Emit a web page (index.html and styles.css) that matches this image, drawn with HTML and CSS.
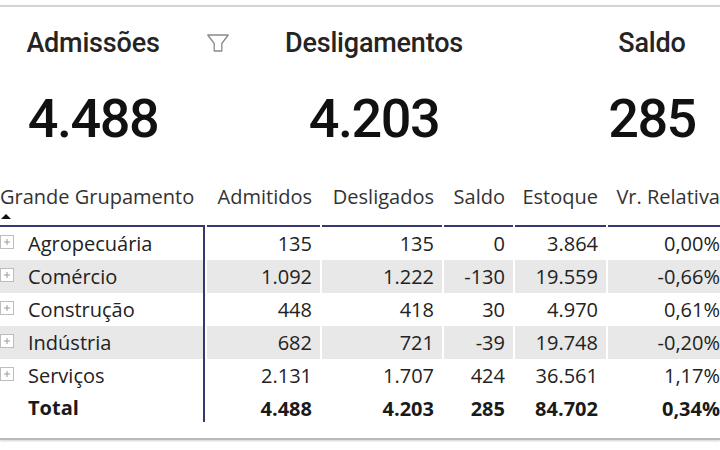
FILE: index.html
```html
<!DOCTYPE html>
<html lang="pt-BR">
<head>
<meta charset="utf-8">
<title>Admissões e Desligamentos</title>
<link rel="stylesheet" href="styles.css">
</head>
<body>
<div class="frame">
  <section class="kpis">
    <div class="card">
      <div class="card-title">Admissões</div>
      <div class="card-value">4.488</div>
    </div>
    <div class="card">
      <div class="card-title">Desligamentos</div>
      <div class="card-value">4.203</div>
    </div>
    <div class="card">
      <div class="card-title">Saldo</div>
      <div class="card-value">285</div>
    </div>
    <svg class="filter-icon" width="22" height="18" viewBox="0 0 22 18" aria-hidden="true">
      <path d="M0.8 1 H21.2 L14.8 9.5 V17 H7.2 V9.5 Z" fill="none" stroke="#8a8a8a" stroke-width="1.3" stroke-linejoin="round"/>
    </svg>
  </section>

  <section class="table-wrap">
    <div class="matrix">
      <div class="hcell first">
        <div class="htext">Grande Grupamento</div>
        <div class="sort-arrow"></div>
      </div>
      <div class="hcell num"><div class="htext">Admitidos</div></div>
      <div class="hcell num"><div class="htext">Desligados</div></div>
      <div class="hcell num"><div class="htext">Saldo</div></div>
      <div class="hcell num"><div class="htext">Estoque</div></div>
      <div class="hcell num"><div class="htext">Vr. Relativa</div></div>

      <div class="cell label"><svg class="plus" width="14" height="14" viewBox="0 0 14 14"><rect x="0.5" y="0.5" width="13" height="13" fill="#fff" stroke="#bdbdbd"/><path d="M4 7 H10 M7 4 V10" stroke="#9a9a9a" stroke-width="1"/></svg><span>Agropecuária</span></div>
      <div class="cell num">135</div>
      <div class="cell num">135</div>
      <div class="cell num">0</div>
      <div class="cell num">3.864</div>
      <div class="cell num">0,00%</div>

      <div class="cell label band"><svg class="plus" width="14" height="14" viewBox="0 0 14 14"><rect x="0.5" y="0.5" width="13" height="13" fill="#fff" stroke="#bdbdbd"/><path d="M4 7 H10 M7 4 V10" stroke="#9a9a9a" stroke-width="1"/></svg><span>Comércio</span></div>
      <div class="cell num band">1.092</div>
      <div class="cell num band">1.222</div>
      <div class="cell num band">-130</div>
      <div class="cell num band">19.559</div>
      <div class="cell num band">-0,66%</div>

      <div class="cell label"><svg class="plus" width="14" height="14" viewBox="0 0 14 14"><rect x="0.5" y="0.5" width="13" height="13" fill="#fff" stroke="#bdbdbd"/><path d="M4 7 H10 M7 4 V10" stroke="#9a9a9a" stroke-width="1"/></svg><span>Construção</span></div>
      <div class="cell num">448</div>
      <div class="cell num">418</div>
      <div class="cell num">30</div>
      <div class="cell num">4.970</div>
      <div class="cell num">0,61%</div>

      <div class="cell label band"><svg class="plus" width="14" height="14" viewBox="0 0 14 14"><rect x="0.5" y="0.5" width="13" height="13" fill="#fff" stroke="#bdbdbd"/><path d="M4 7 H10 M7 4 V10" stroke="#9a9a9a" stroke-width="1"/></svg><span>Indústria</span></div>
      <div class="cell num band">682</div>
      <div class="cell num band">721</div>
      <div class="cell num band">-39</div>
      <div class="cell num band">19.748</div>
      <div class="cell num band">-0,20%</div>

      <div class="cell label"><svg class="plus" width="14" height="14" viewBox="0 0 14 14"><rect x="0.5" y="0.5" width="13" height="13" fill="#fff" stroke="#bdbdbd"/><path d="M4 7 H10 M7 4 V10" stroke="#9a9a9a" stroke-width="1"/></svg><span>Serviços</span></div>
      <div class="cell num">2.131</div>
      <div class="cell num">1.707</div>
      <div class="cell num">424</div>
      <div class="cell num">36.561</div>
      <div class="cell num">1,17%</div>

      <div class="cell label total"><span>Total</span></div>
      <div class="cell num total">4.488</div>
      <div class="cell num total">4.203</div>
      <div class="cell num total">285</div>
      <div class="cell num total">84.702</div>
      <div class="cell num total">0,34%</div>
    </div>
  </section>
</div>
</body>
</html>
```

FILE: styles.css
```css
html, body {
  margin: 0;
  padding: 0;
  background: #ffffff;
  overflow: hidden;
}

body {
  width: 720px;
  height: 450px;
}

.frame {
  margin-top: 5px;
  border-top: 2px solid #d4d4d4;
  border-bottom: 2px solid #b9b9b9;
  box-shadow: 0 1px 2px rgba(0, 0, 0, 0.18);
  padding-bottom: 13px;
  overflow: hidden;
}

.kpis {
  position: relative;
  display: grid;
  grid-template-columns: 186px 376px 180px;
  width: 742px;
  padding-top: 20px;
}

.card {
  display: flex;
  flex-direction: column;
  align-items: center;
  font-family: Roboto, "Liberation Sans", sans-serif;
  color: #252423;
}

.card-title {
  font-size: 27px;
  line-height: 32px;
  font-weight: 500;
  letter-spacing: -0.2px;
  white-space: nowrap;
}

.card-value {
  margin-top: 30px;
  font-size: 54px;
  line-height: 60px;
  font-weight: 500;
  letter-spacing: -1.5px;
  color: #111111;
  white-space: nowrap;
}

.filter-icon {
  position: absolute;
  left: 207px;
  top: 27px;
}

.table-wrap {
  margin-top: 34px;
  overflow: hidden;
}

.matrix {
  display: grid;
  grid-template-columns: 205px 113px 120px 69px 91px 120px;
  column-gap: 2px;
  width: max-content;
  font-family: "Open Sans", "Noto Sans", sans-serif;
  font-size: 20px;
  color: #222222;
}

.hcell {
  border-bottom: 2px solid #37376f;
  color: #333333;
  white-space: nowrap;
}

.htext {
  line-height: 27px;
}

.hcell.num {
  text-align: right;
  padding-right: 8px;
}

.hcell.first {
  padding-bottom: 6px;
}

.sort-arrow {
  margin-top: 4px;
  margin-left: 1px;
  width: 0;
  height: 0;
  border-left: 5px solid transparent;
  border-right: 5px solid transparent;
  border-bottom: 5px solid #111111;
}

.cell {
  height: 33px;
  line-height: 33px;
  white-space: nowrap;
}

.cell.num {
  text-align: right;
  padding-right: 8px;
}

.cell.label {
  display: flex;
  align-items: center;
  gap: 14px;
  padding-left: 0;
  border-right: 2px solid #37376f;
}

.cell.label .plus {
  flex: none;
  margin-top: -3px;
}

.cell.band {
  background: #e8e8e8;
}

.cell.total {
  font-weight: 700;
  color: #1a1a1a;
}

.cell.label.total {
  padding-left: 28px;
  height: 30px;
  margin-bottom: 3px;
}
```
